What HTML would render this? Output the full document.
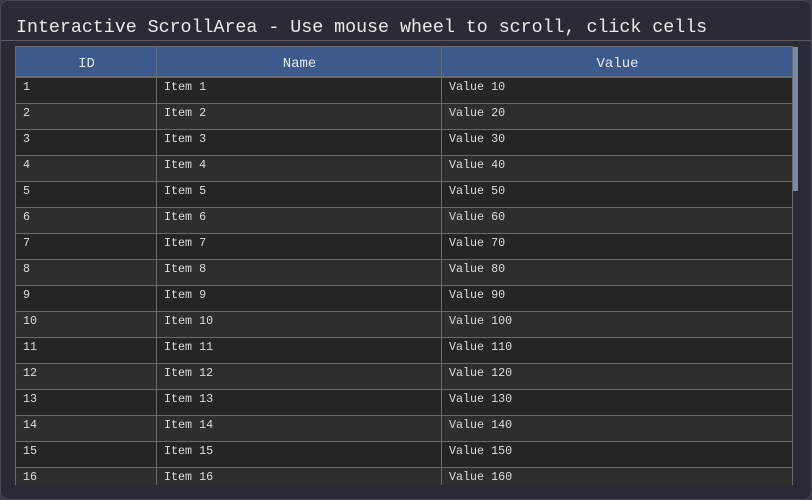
<!DOCTYPE html>
<html><head><style>
html,body{margin:0;padding:0;width:812px;height:500px;background:#3b3b46;overflow:hidden}
.win{position:absolute;left:0;top:0;width:810px;height:498px;background:#2b2b35;border:1px solid #4a4a56;border-radius:8px;overflow:hidden;font-family:"Liberation Mono",monospace;color:#e6e6e6}
.title{position:absolute;left:15px;top:15px;font-size:18.3px;line-height:24px;color:#ececec}
.sep{position:absolute;left:0;top:39px;width:812px;height:1px;background:#5a5a64}
.tbl{position:absolute;left:14px;top:45px;width:778px;height:439px;overflow:hidden}
.hd{position:absolute;left:0;top:0;width:778px;height:32px;background:#3d5a8c;box-sizing:border-box;border:1px solid #6a6a6a;border-bottom:2px solid #6a6a6a}
.hd div{position:absolute;top:2px;line-height:30px;font-size:14px;color:#e8ecf4;text-align:center}
.row{position:absolute;left:0;width:778px;height:26px;box-sizing:border-box;border-left:1px solid #6a6a6a;border-right:1px solid #6a6a6a;border-bottom:1px solid #6a6a6a;font-size:11.7px;color:#dcdcdc}
.row span{position:absolute;top:2px;line-height:14px}
.o{background:#252525}.e{background:#2e2e2e}
.v1,.v2{position:absolute;top:0;width:1px;height:439px;background:#6a6a6a}
.sb{position:absolute;left:792px;top:46px;width:5px;height:144px;background:#7a8aa6}
</style></head><body><div class="win">
<div class="title">Interactive ScrollArea - Use mouse wheel to scroll, click cells</div>
<div class="sep"></div>
<div class="tbl" id="t">
<div class="hd"><div style="left:0;width:141px">ID</div><div style="left:141px;width:285px">Name</div><div style="left:426px;width:351px">Value</div></div>
<div class="row o" style="top:32px"><span style="left:7px">1</span><span style="left:148px">Item 1</span><span style="left:433px">Value 10</span></div>
<div class="row e" style="top:58px"><span style="left:7px">2</span><span style="left:148px">Item 2</span><span style="left:433px">Value 20</span></div>
<div class="row o" style="top:84px"><span style="left:7px">3</span><span style="left:148px">Item 3</span><span style="left:433px">Value 30</span></div>
<div class="row e" style="top:110px"><span style="left:7px">4</span><span style="left:148px">Item 4</span><span style="left:433px">Value 40</span></div>
<div class="row o" style="top:136px"><span style="left:7px">5</span><span style="left:148px">Item 5</span><span style="left:433px">Value 50</span></div>
<div class="row e" style="top:162px"><span style="left:7px">6</span><span style="left:148px">Item 6</span><span style="left:433px">Value 60</span></div>
<div class="row o" style="top:188px"><span style="left:7px">7</span><span style="left:148px">Item 7</span><span style="left:433px">Value 70</span></div>
<div class="row e" style="top:214px"><span style="left:7px">8</span><span style="left:148px">Item 8</span><span style="left:433px">Value 80</span></div>
<div class="row o" style="top:240px"><span style="left:7px">9</span><span style="left:148px">Item 9</span><span style="left:433px">Value 90</span></div>
<div class="row e" style="top:266px"><span style="left:7px">10</span><span style="left:148px">Item 10</span><span style="left:433px">Value 100</span></div>
<div class="row o" style="top:292px"><span style="left:7px">11</span><span style="left:148px">Item 11</span><span style="left:433px">Value 110</span></div>
<div class="row e" style="top:318px"><span style="left:7px">12</span><span style="left:148px">Item 12</span><span style="left:433px">Value 120</span></div>
<div class="row o" style="top:344px"><span style="left:7px">13</span><span style="left:148px">Item 13</span><span style="left:433px">Value 130</span></div>
<div class="row e" style="top:370px"><span style="left:7px">14</span><span style="left:148px">Item 14</span><span style="left:433px">Value 140</span></div>
<div class="row o" style="top:396px"><span style="left:7px">15</span><span style="left:148px">Item 15</span><span style="left:433px">Value 150</span></div>
<div class="row e" style="top:422px"><span style="left:7px">16</span><span style="left:148px">Item 16</span><span style="left:433px">Value 160</span></div>
<div class="v1" style="left:141px"></div><div class="v2" style="left:426px"></div>
</div>
<div class="sb"></div>
</div></body></html>
